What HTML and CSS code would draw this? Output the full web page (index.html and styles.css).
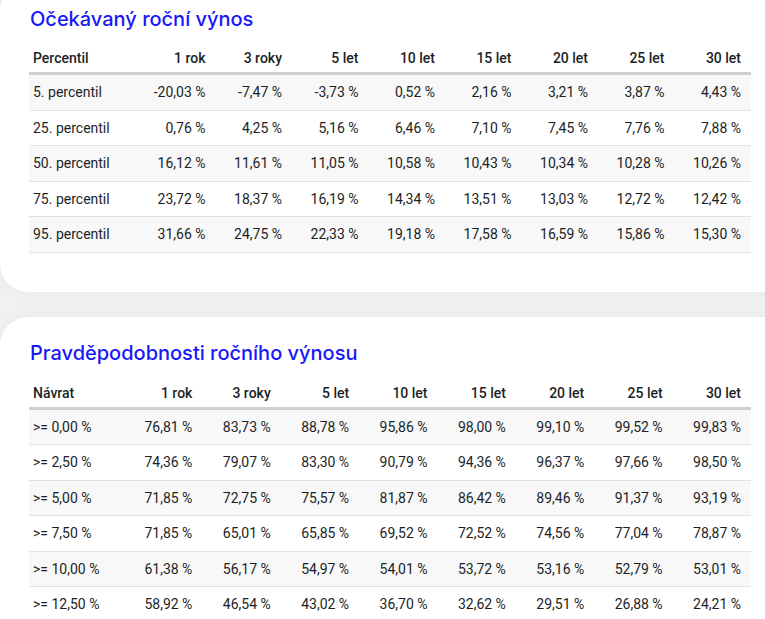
FILE: index.html
```html
<!DOCTYPE html>
<html lang="cs">
<head>
<meta charset="utf-8">
<link rel="stylesheet" href="styles.css">
</head>
<body>
<section class="card card-top">
  <h2 class="title">Očekávaný roční výnos</h2>
  <table class="data t1">
    <thead>
      <tr><th>Percentil</th><th>1 rok</th><th>3 roky</th><th>5 let</th><th>10 let</th><th>15 let</th><th>20 let</th><th>25 let</th><th>30 let</th></tr>
    </thead>
    <tbody>
      <tr><td>5. percentil</td><td>-20,03 %</td><td>-7,47 %</td><td>-3,73 %</td><td>0,52 %</td><td>2,16 %</td><td>3,21 %</td><td>3,87 %</td><td>4,43 %</td></tr>
      <tr><td>25. percentil</td><td>0,76 %</td><td>4,25 %</td><td>5,16 %</td><td>6,46 %</td><td>7,10 %</td><td>7,45 %</td><td>7,76 %</td><td>7,88 %</td></tr>
      <tr><td>50. percentil</td><td>16,12 %</td><td>11,61 %</td><td>11,05 %</td><td>10,58 %</td><td>10,43 %</td><td>10,34 %</td><td>10,28 %</td><td>10,26 %</td></tr>
      <tr><td>75. percentil</td><td>23,72 %</td><td>18,37 %</td><td>16,19 %</td><td>14,34 %</td><td>13,51 %</td><td>13,03 %</td><td>12,72 %</td><td>12,42 %</td></tr>
      <tr><td>95. percentil</td><td>31,66 %</td><td>24,75 %</td><td>22,33 %</td><td>19,18 %</td><td>17,58 %</td><td>16,59 %</td><td>15,86 %</td><td>15,30 %</td></tr>
    </tbody>
  </table>
</section>
<section class="card card-bottom">
  <h2 class="title">Pravděpodobnosti ročního výnosu</h2>
  <table class="data t2">
    <thead>
      <tr><th>Návrat</th><th>1 rok</th><th>3 roky</th><th>5 let</th><th>10 let</th><th>15 let</th><th>20 let</th><th>25 let</th><th>30 let</th></tr>
    </thead>
    <tbody>
      <tr><td>&gt;= 0,00 %</td><td>76,81 %</td><td>83,73 %</td><td>88,78 %</td><td>95,86 %</td><td>98,00 %</td><td>99,10 %</td><td>99,52 %</td><td>99,83 %</td></tr>
      <tr><td>&gt;= 2,50 %</td><td>74,36 %</td><td>79,07 %</td><td>83,30 %</td><td>90,79 %</td><td>94,36 %</td><td>96,37 %</td><td>97,66 %</td><td>98,50 %</td></tr>
      <tr><td>&gt;= 5,00 %</td><td>71,85 %</td><td>72,75 %</td><td>75,57 %</td><td>81,87 %</td><td>86,42 %</td><td>89,46 %</td><td>91,37 %</td><td>93,19 %</td></tr>
      <tr><td>&gt;= 7,50 %</td><td>71,85 %</td><td>65,01 %</td><td>65,85 %</td><td>69,52 %</td><td>72,52 %</td><td>74,56 %</td><td>77,04 %</td><td>78,87 %</td></tr>
      <tr><td>&gt;= 10,00 %</td><td>61,38 %</td><td>56,17 %</td><td>54,97 %</td><td>54,01 %</td><td>53,72 %</td><td>53,16 %</td><td>52,79 %</td><td>53,01 %</td></tr>
      <tr><td>&gt;= 12,50 %</td><td>58,92 %</td><td>46,54 %</td><td>43,02 %</td><td>36,70 %</td><td>32,62 %</td><td>29,51 %</td><td>26,88 %</td><td>24,21 %</td></tr>
    </tbody>
  </table>
</section>
</body>
</html>
```
FILE: styles.css
```css
html, body {
  margin: 0;
  padding: 0;
}
body {
  background: #f1f1f1;
  font-family: Roboto, "Liberation Sans", sans-serif;
  color: #1c1f26;
  overflow: hidden;
}
.card {
  background: #fff;
  border-radius: 28px;
  margin-right: -40px;
  padding: 24px 54px 39px 29px;
  box-shadow: 0 0 18px rgba(0, 0, 0, 0.04);
}
.card-top {
  margin-top: -17px;
}
.card-bottom {
  margin-top: 25px;
}
.title {
  margin: 0;
  font-family: Inter, "Open Sans", sans-serif;
  font-weight: 500;
  font-size: 20px;
  line-height: 24px;
  color: #1818f8;
  padding-left: 1px;
}
.t1 { margin-top: 14px; }
.t2 { margin-top: 15px; }
.data {
  width: 722px;
  border-collapse: collapse;
  font-size: 14px;
  table-layout: fixed;
}
.data th {
  font-weight: 500;
  text-align: right;
  padding: 6px 10px 6px 4px;
  line-height: 15px;
  border-bottom: 3px solid #cfcfcf;
}
.data td {
  text-align: right;
  padding: 10px 10px 10px 4px;
  line-height: 14.5px;
  border-bottom: 1px solid #e1e2e8;
  white-space: nowrap;
}
.data th:first-child,
.data td:first-child {
  text-align: left;
}
.data tbody tr:nth-child(odd) td {
  background: #f8f8f8;
}
.t1 th:first-child { width: 96px; }
.t2 th:first-child { width: 81px; }
```
